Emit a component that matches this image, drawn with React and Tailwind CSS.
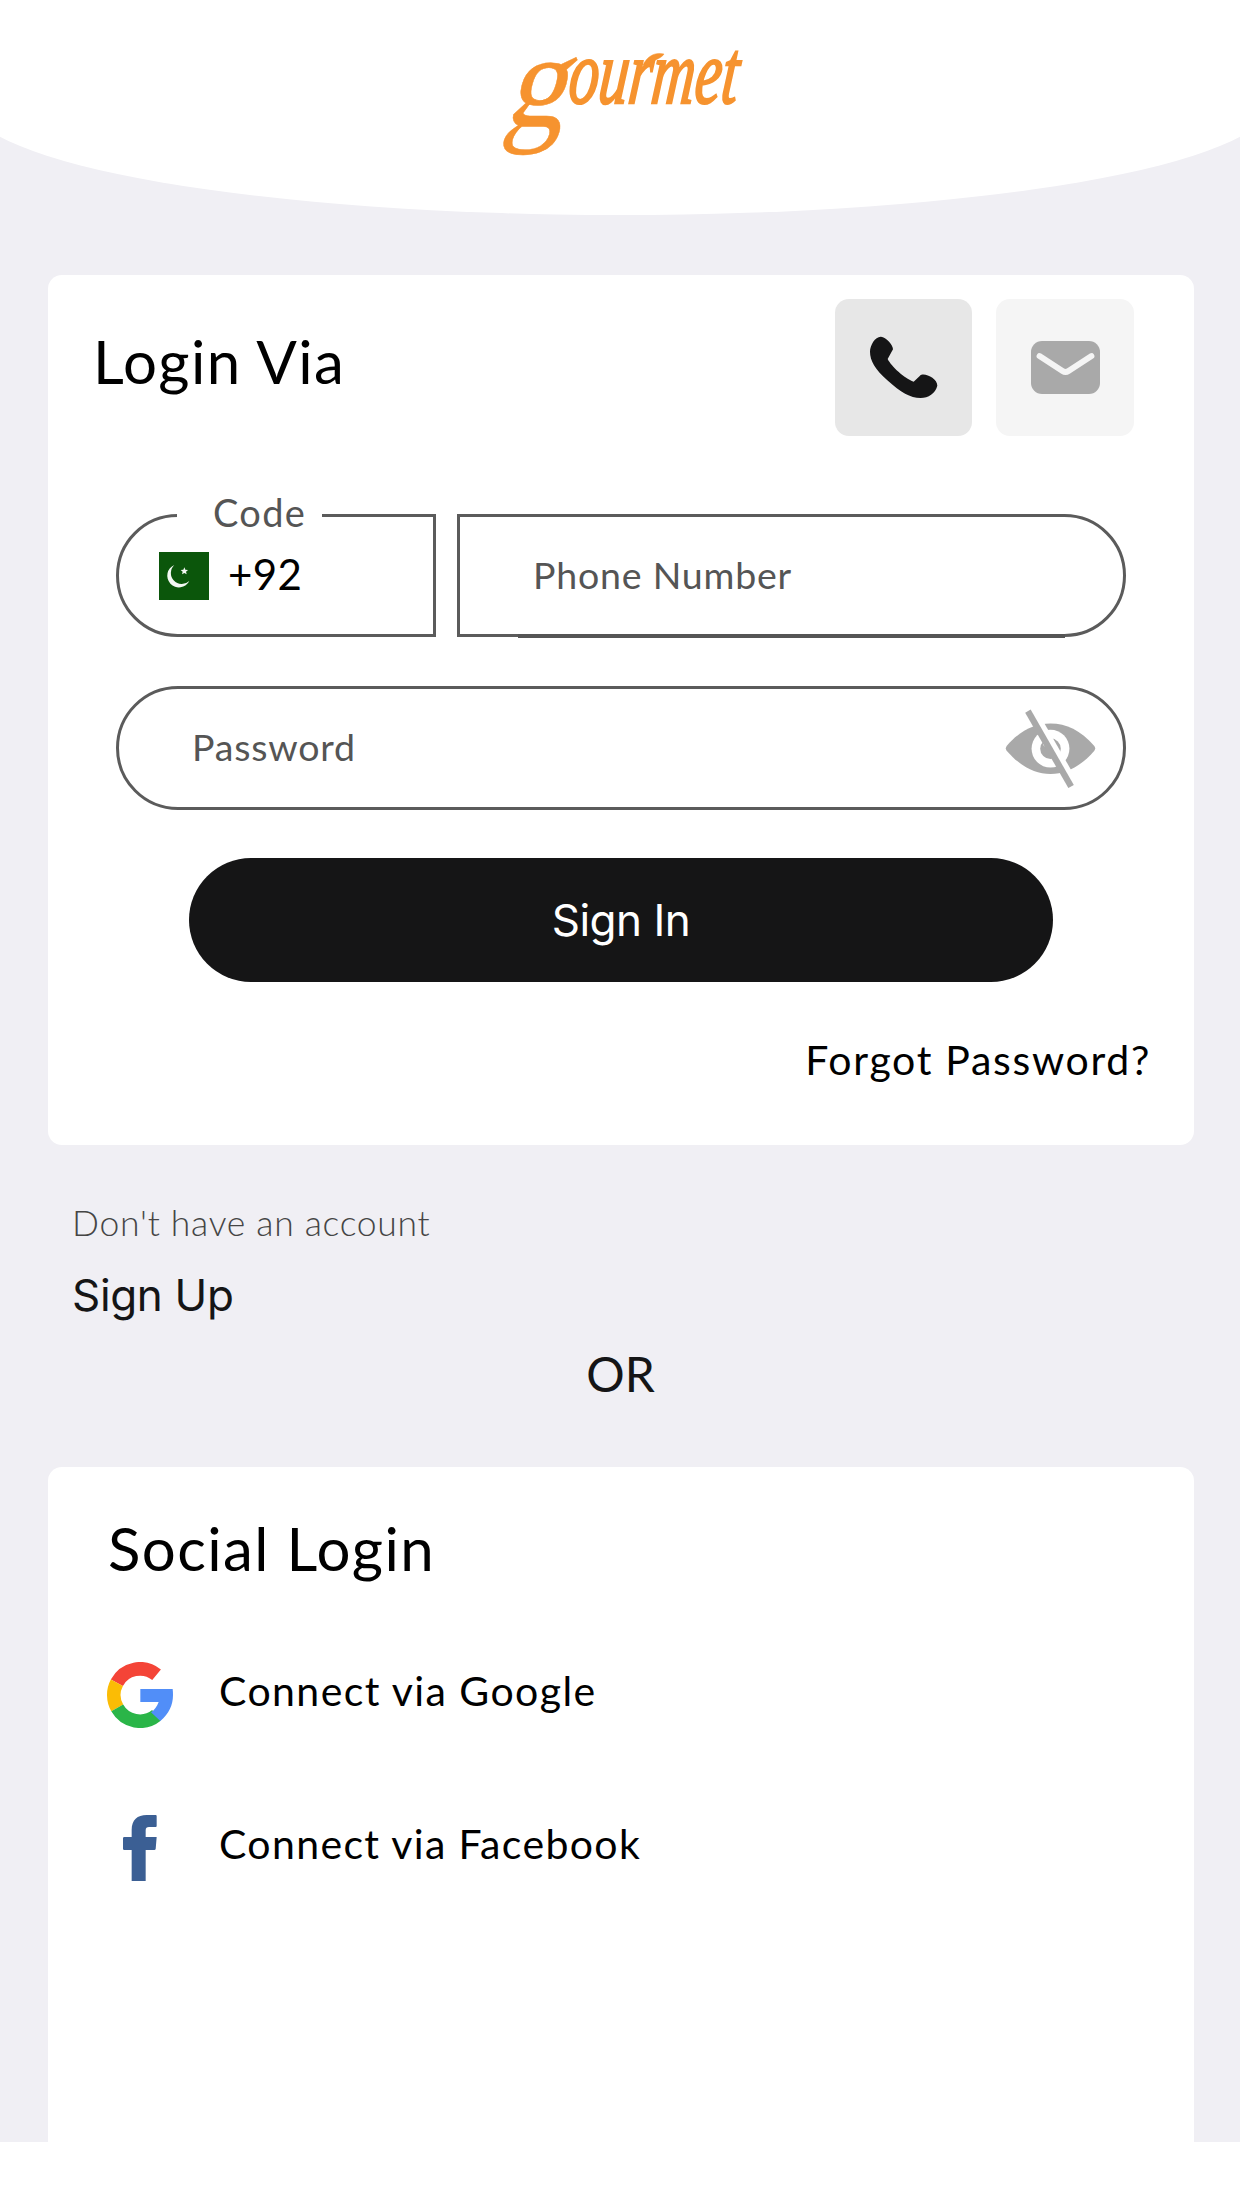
import React from "react";

function Logo() {
  return (
    <svg
      viewBox="480 0 280 200"
      className="h-[200px] w-[280px] overflow-visible"
      fill="#f6932f"
      stroke="#f6932f"
      fontFamily="'Liberation Serif', serif"
    >
      <text transform="translate(503 126) skewX(-16) scale(0.9 1)" fontSize="134" strokeWidth="0.5">
        g
      </text>
      <text
        transform="translate(567 103) skewX(-6)"
        fontSize="91"
        fontStyle="italic"
        strokeWidth="2.4"
        textLength="169"
        lengthAdjust="spacingAndGlyphs"
      >
        ourmet
      </text>
      <path
        d="M643 65C648 55 656 52 664 54C661 59 654 59 647 66Z"
        strokeWidth="0.5"
      />
    </svg>
  );
}

function PhoneIcon() {
  return (
    <svg viewBox="45 87 411 411" className="h-full w-full" fill="#151516">
      <path d="M183 200C198 202 219 224 219 238L203 267C213 288 254 326 281 335L300 317C312 306 352 325 352 347C346 370 325 384 302 384C270 384 243 368 202 331C165 297 150 272 150 245C150 225 166 199 183 200Z" />
    </svg>
  );
}

function MailIcon() {
  return (
    <svg viewBox="0 0 69 53" className="h-[53px] w-[69px]">
      <rect width="69" height="53" rx="11" fill="#a9a9a9" />
      <path
        d="M8.5 15L31.5 30Q34.5 32 37.500 30L60.500 15"
        fill="none"
        stroke="#f5f5f5"
        strokeWidth="5.8"
        strokeLinecap="round"
      />
    </svg>
  );
}

function HiddenEyeIcon() {
  return (
    <svg viewBox="130 655 280 240" className="mt-[2px] h-[80px] w-[93px]">
      <path
        d="M138 766C180 718 222 698 270 698C318 698 360 718 402 766Q407 773 402 780C360 828 318 850 270 850C222 850 180 828 138 780Q133 773 138 766Z"
        fill="#a9a9a9"
      />
      <circle cx="270" cy="774" r="57" fill="#fff" />
      <circle cx="270" cy="774" r="31" fill="#a9a9a9" />
      <circle cx="258" cy="757" r="11" fill="#fff" />
      <path d="M222 664L349 886" stroke="#fff" strokeWidth="18" />
      <path d="M202 661L332 888" stroke="#a9a9a9" strokeWidth="19" />
    </svg>
  );
}

function PakistanFlag() {
  return (
    <svg viewBox="177 216 150 144" className="h-[48px] w-[50px]">
      <rect x="177" y="216" width="150" height="144" fill="#0b560b" />
      <path
        d="M223 255A35 35 0 1 0 268 303A32 32 0 0 1 223 255Z"
        fill="#f4f8f4"
      />
      <path
        d="M253 262L256 269L264 270L258 275L260 283L253 279L246 283L248 275L242 270L250 269Z"
        fill="#f4f8f4"
      />
    </svg>
  );
}

function GoogleIcon() {
  return (
    <svg viewBox="21 36 198 198" className="size-[66px]" fill="none">
      <g strokeWidth="41">
        <path d="M50.600 98.300A78.500 78.500 0 0 1 169.700 74.300" stroke="#f44437" />
        <path d="M51.700 173.700A78.500 78.500 0 0 1 50.600 98.300" stroke="#fbbc05" />
        <path d="M169.200 196.200A78.500 78.500 0 0 1 51.700 173.700" stroke="#2ab548" />
      </g>
      <path
        d="M218 117H121V156H176C171 170 163 180 153 187L181 213C207 191 219 165 219 135Q219 125 218 117Z"
        fill="#518ef8"
      />
    </svg>
  );
}

function FacebookIcon() {
  return (
    <svg viewBox="21 495 198 198" className="size-[66px]" fill="#3b5f94">
      <path d="M95 693V600H73Q69 600 69 596V565Q69 561 73 561H95V540C95 510 112 495 140 495H167Q170 495 170 498V528Q170 531 167 531H147Q137 531 137 541V561H170L167 597Q166 600 163 600H137V693Z" />
    </svg>
  );
}

function SocialRow({ icon, children, className }) {
  return (
    <div className={"flex items-center gap-[46px] " + className}>
      {icon}
      <span className="pb-[8px] text-[41px] leading-none">{children}</span>
    </div>
  );
}

export default function App() {
  return (
    <div className="h-[2208px] w-[1240px] overflow-hidden bg-white font-[Lato,sans-serif] text-black">
      <div className="flex h-[2142px] flex-col overflow-hidden bg-[#f0eff4]">
        <header className="-mx-[30px] flex h-[215px] shrink-0 justify-center rounded-b-[650px_112px] bg-white">
          <Logo />
        </header>

        <main className="mx-[48px] mt-[60px] flex w-[1146px] flex-1 flex-col">
          <section className="h-[870px] shrink-0 rounded-[14px] bg-white pt-[24px]">
            <div className="flex h-[137px] pr-[60px] pl-[45px]">
              <h1 className="flex-1 pt-[32px] text-[60px] leading-none tracking-[1.4px]">
                Login Via
              </h1>
              <div className="flex gap-[24px]">
                <button className="size-[137px] rounded-[14px] bg-[#e7e7e7]">
                  <PhoneIcon />
                </button>
                <button className="flex h-[137px] w-[138px] items-center justify-center rounded-[14px] bg-[#f5f5f5]">
                  <MailIcon />
                </button>
              </div>
            </div>

            <div className="mx-[68px] mt-[78px] flex gap-[21px] text-[#555555]">
              <div className="relative flex h-[123px] w-[320px] items-center gap-[19px] rounded-l-[62px] border-[3px] border-[#5b5b5b] pl-[40px]">
                <span className="absolute -top-[24px] left-[58px] w-[145px] bg-white pl-[36px] text-[38px] leading-none tracking-[1.3px]">
                  Code
                </span>
                <PakistanFlag />
                <span className="pb-[4px] text-[42px] leading-none tracking-[0.4px] text-black">
                  +92
                </span>
              </div>
              <div className="relative flex h-[123px] w-[669px] items-center rounded-r-[62px] border-[3px] border-[#5b5b5b] pl-[73px]">
                <span className="pb-[1px] text-[37.5px] leading-none tracking-[0.8px]">
                  Phone Number
                </span>
                <span className="absolute -bottom-[4px] left-[58px] h-[4px] w-[547px] bg-[#555555]" />
              </div>
            </div>

            <div className="mx-[68px] mt-[49px] flex h-[124px] w-[1010px] items-center justify-between rounded-full border-[3px] border-[#5b5b5b] pr-[26px] pl-[73px] text-[#555555]">
              <span className="pb-[2px] text-[37.5px] leading-none tracking-[0.8px]">
                Password
              </span>
              <HiddenEyeIcon />
            </div>

            <button className="mx-[141px] mt-[48px] flex h-[124px] w-[864px] items-center justify-center rounded-full bg-[#151516] font-[Inter,sans-serif] text-[44px] leading-none tracking-[-0.5px] text-white">
              Sign In
            </button>

            <p className="mt-[57px] pr-[43px] text-right text-[41px] leading-none tracking-[1.7px]">
              Forgot Password?
            </p>
          </section>

          <p className="mt-[60px] pl-[24px] text-[35.5px] leading-none font-light tracking-[0.7px] text-[#454545]">
            Don't have an account
          </p>
          <p className="mt-[32px] pl-[24px] font-[Inter,sans-serif] text-[44px] leading-none tracking-[-0.35px] text-[#151516]">
            Sign Up
          </p>
          <p className="mt-[33px] pr-[1px] text-center text-[48px] leading-none text-[#151516]">
            OR
          </p>

          <section className="mt-[69px] flex-1 rounded-t-[14px] bg-white pt-[51px] pl-[59px]">
            <h2 className="pl-[1px] text-[60px] leading-none tracking-[1.4px]">
              Social Login
            </h2>
            <SocialRow icon={<GoogleIcon />} className="mt-[84px] tracking-[1.42px]">
              Connect via Google
            </SocialRow>
            <SocialRow icon={<FacebookIcon />} className="mt-[87px] tracking-[1.35px]">
              Connect via Facebook
            </SocialRow>
          </section>
        </main>
      </div>
    </div>
  );
}
